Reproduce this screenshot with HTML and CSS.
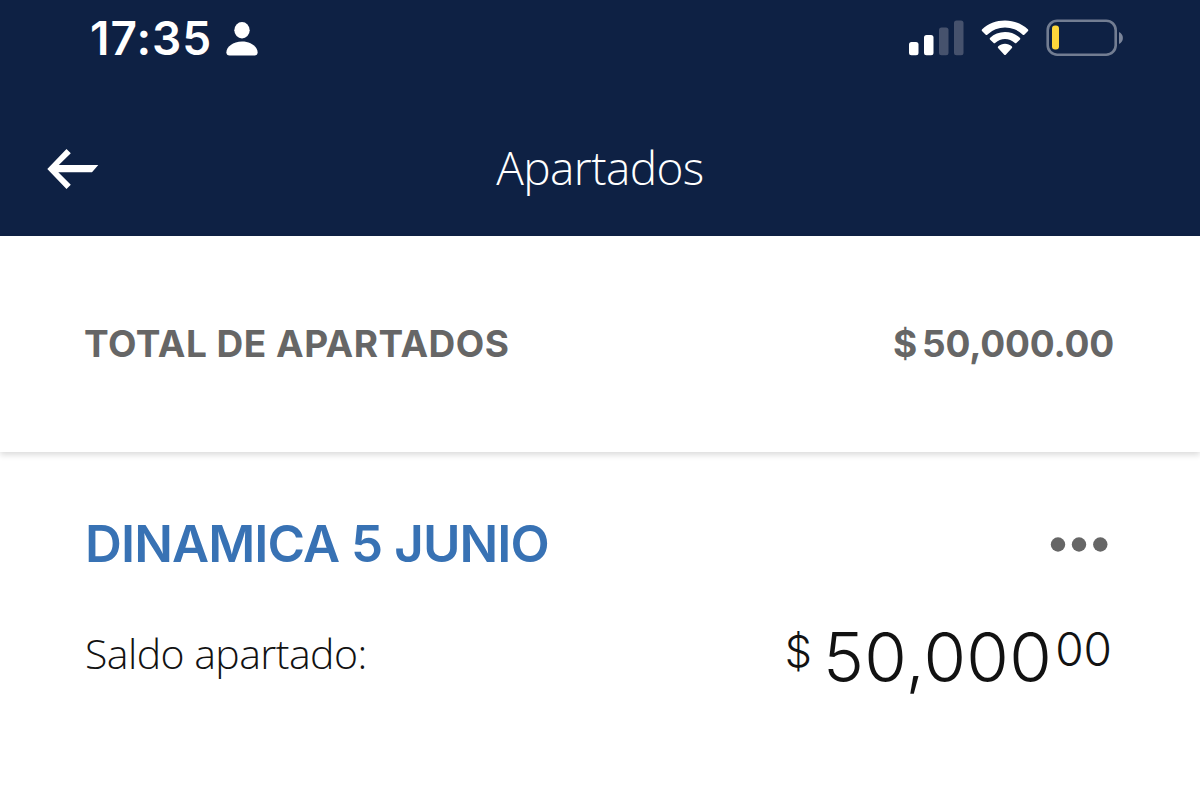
FILE: index.html
```html
<!DOCTYPE html>
<html lang="es">
<head>
<meta charset="UTF-8" />
<meta name="viewport" content="width=device-width, initial-scale=1" />
<title>Apartados</title>
<link rel="stylesheet" href="styles.css">
</head>
<body>

<header>
  <!-- Status bar -->
  <div class="status-bar">
    <div class="status-left">
      <span class="time">17:35</span>
      <svg class="person" viewBox="0 0 32 34" width="32" height="34">
        <ellipse cx="16" cy="8.2" rx="7.7" ry="8.2" />
        <path d="M16 19.5c-9 0-15.6 5.5-15.6 10.7 0 2.3 1.1 3.3 3.2 3.3h24.8c2.1 0 3.2-1 3.2-3.3 0-5.2-6.6-10.7-15.6-10.7z" />
      </svg>
    </div>
    <div class="status-right">
      <svg class="signal" viewBox="0 0 56 36" width="56" height="36">
        <rect x="1" y="22" width="9.5" height="13.3" rx="2.5" />
        <rect x="16" y="15" width="9.5" height="20.3" rx="2.5" />
        <rect class="off" x="31" y="7.6" width="9.5" height="27.7" rx="2.5" />
        <rect class="off" x="46" y="0.5" width="9.5" height="34.8" rx="2.5" />
      </svg>
      <svg class="wifi" viewBox="0 0 48 36" width="48" height="36">
        <path d="M24 0.5C15 0.5 7 3.8 1.2 9.3a1.4 1.4 0 0 0 0 2L4.5 14.4a1.4 1.4 0 0 0 2 0A25.5 25.5 0 0 1 41.5 14.4a1.4 1.4 0 0 0 2 0L46.8 11.3a1.4 1.4 0 0 0 0-2C41 3.8 33 0.5 24 0.5z" />
        <path d="M24 12C18.2 12 13 14.2 9.2 17.7a1.4 1.4 0 0 0 0 2L12.4 22.8a1.4 1.4 0 0 0 2 0A13.8 13.8 0 0 1 33.6 22.8a1.4 1.4 0 0 0 2 0L38.8 19.7a1.4 1.4 0 0 0 0-2C35 14.2 29.8 12 24 12z" />
        <path d="M24 23.8c-2.6 0-4.9.9-6.7 2.4a1.4 1.4 0 0 0 0 2.1L23 34.5a1.4 1.4 0 0 0 2 0L30.7 28.3a1.4 1.4 0 0 0 0-2.1C28.9 24.7 26.6 23.8 24 23.8z" />
      </svg>
      <svg class="battery" viewBox="0 0 78 38" width="78" height="38">
        <rect class="case" x="1.7" y="1.7" width="68" height="34" rx="9.5" />
        <rect class="level" x="6" y="6.5" width="7" height="24" rx="3" />
        <path class="tip" d="M73 13v12c2.4-1 3.9-3.4 3.9-6s-1.5-5-3.9-6z" />
      </svg>
    </div>
  </div>

  <!-- Title bar -->
  <nav>
    <a class="back" href="#" aria-label="Volver">
      <svg viewBox="0 0 54 42" width="54" height="42">
        <path d="M20.5 1L1.3 21 20.5 41l4.3-4.3-12.5-12.4H46L52.3 17H12.8L24.8 5.3z" />
      </svg>
    </a>
    <h1>Apartados</h1>
  </nav>
</header>

<section class="total">
  <h2>TOTAL DE APARTADOS</h2>
  <p class="total-amount"><span class="total-sign">$</span>50,000.00</p>
</section>

<main>
  <div class="item-head">
    <h3>DINAMICA 5 JUNIO</h3>
    <svg class="dots" viewBox="0 0 58 16" width="58" height="16">
      <circle cx="8" cy="8.5" r="7.2" />
      <circle cx="29" cy="8.5" r="7.2" />
      <circle cx="50.3" cy="8.5" r="7.2" />
    </svg>
  </div>
  <div class="item-balance">
    <p class="label">Saldo apartado:</p>
    <p class="amount"><span class="sign">$</span><span class="whole">50,000</span><span class="cents">00</span></p>
  </div>
</main>

</body>
</html>
```
FILE: styles.css
```css
/* Reset */
* {
  margin: 0; padding: 0; box-sizing: border-box;
}
body {
  font-family: 'Open Sans', 'Noto Sans', sans-serif;
  background: #fff;
  color: #121212;
  overflow: hidden;
}
svg {
  display: block;
}
header {
  background: #0e2144;
  color: white;
  height: 236px;
}

/* Status bar */
.status-bar {
  height: 76px;
  padding: 0 76px 0 90px;
  display: flex;
  justify-content: space-between;
  align-items: center;
}
.status-left,
.status-right {
  display: flex;
  align-items: center;
}
.time {
  font-family: Inter, sans-serif;
  font-size: 46px;
  font-weight: 600;
  line-height: 76px;
  letter-spacing: 1px;
}
.person {
  fill: white;
  margin: 2px 0 0 14px;
}
.signal,
.wifi {
  fill: white;
}
.off {
  fill: #46526d;
}
.wifi {
  margin-left: 17px;
}
.battery {
  margin-left: 17px;
}
.case {
  fill: none;
  stroke: #727d92;
  stroke-width: 2.6;
}
.level {
  fill: #fdd63b;
}
.tip {
  fill: #7b859a;
}

/* Title bar */
nav {
  height: 160px;
  padding: 0 46px;
  display: grid;
  grid-template-columns: 54px 1fr 54px;
  align-items: start;
}
.back {
  margin-top: 72px;
}
.back svg {
  fill: white;
}
h1 {
  margin-top: 61px;
  font-size: 46px;
  font-weight: 300;
  line-height: 60px;
  letter-spacing: -0.6px;
  text-align: center;
}

/* Total */
.total {
  height: 216px;
  padding: 0 86px 0 84px;
  display: flex;
  justify-content: space-between;
  align-items: center;
  color: #666;
  box-shadow: 0 3px 6px rgba(0,0,0,0.14);
}
h2,
.total-amount {
  font-family: Inter, sans-serif;
  font-size: 37px;
  font-weight: 700;
  line-height: 50px;
}
h2 {
  letter-spacing: 0.5px;
}
.total-amount {
  letter-spacing: -0.2px;
}
.total-sign {
  margin-right: 5px;
}

/* Saved item */
main {
  padding: 61px 88px 0 85px;
}
.item-head,
.item-balance {
  display: flex;
  justify-content: space-between;
  align-items: center;
}
.item-head {
  height: 62px;
}
h3 {
  font-family: Inter, sans-serif;
  font-size: 51px;
  font-weight: 600;
  line-height: 60px;
  letter-spacing: -0.9px;
  color: #3872b4;
}
.dots {
  fill: #666;
  margin-right: 4px;
}
.item-balance {
  height: 100px;
  margin-top: 29px;
}
.label {
  font-size: 41px;
  font-weight: 300;
  line-height: 56px;
  letter-spacing: -0.55px;
  margin-bottom: 2px;
}
.amount {
  font-family: Inter, sans-serif;
  display: flex;
  align-items: flex-start;
  font-weight: 300;
  line-height: 1;
  padding-top: 6px;
}
.sign {
  font-size: 43px;
  margin: 7px 11px 0 0;
}
.whole {
  font-size: 69px;
  letter-spacing: 0.3px;
}
.cents {
  font-size: 46px;
  margin: 3px 0 0 3px;
}
```
